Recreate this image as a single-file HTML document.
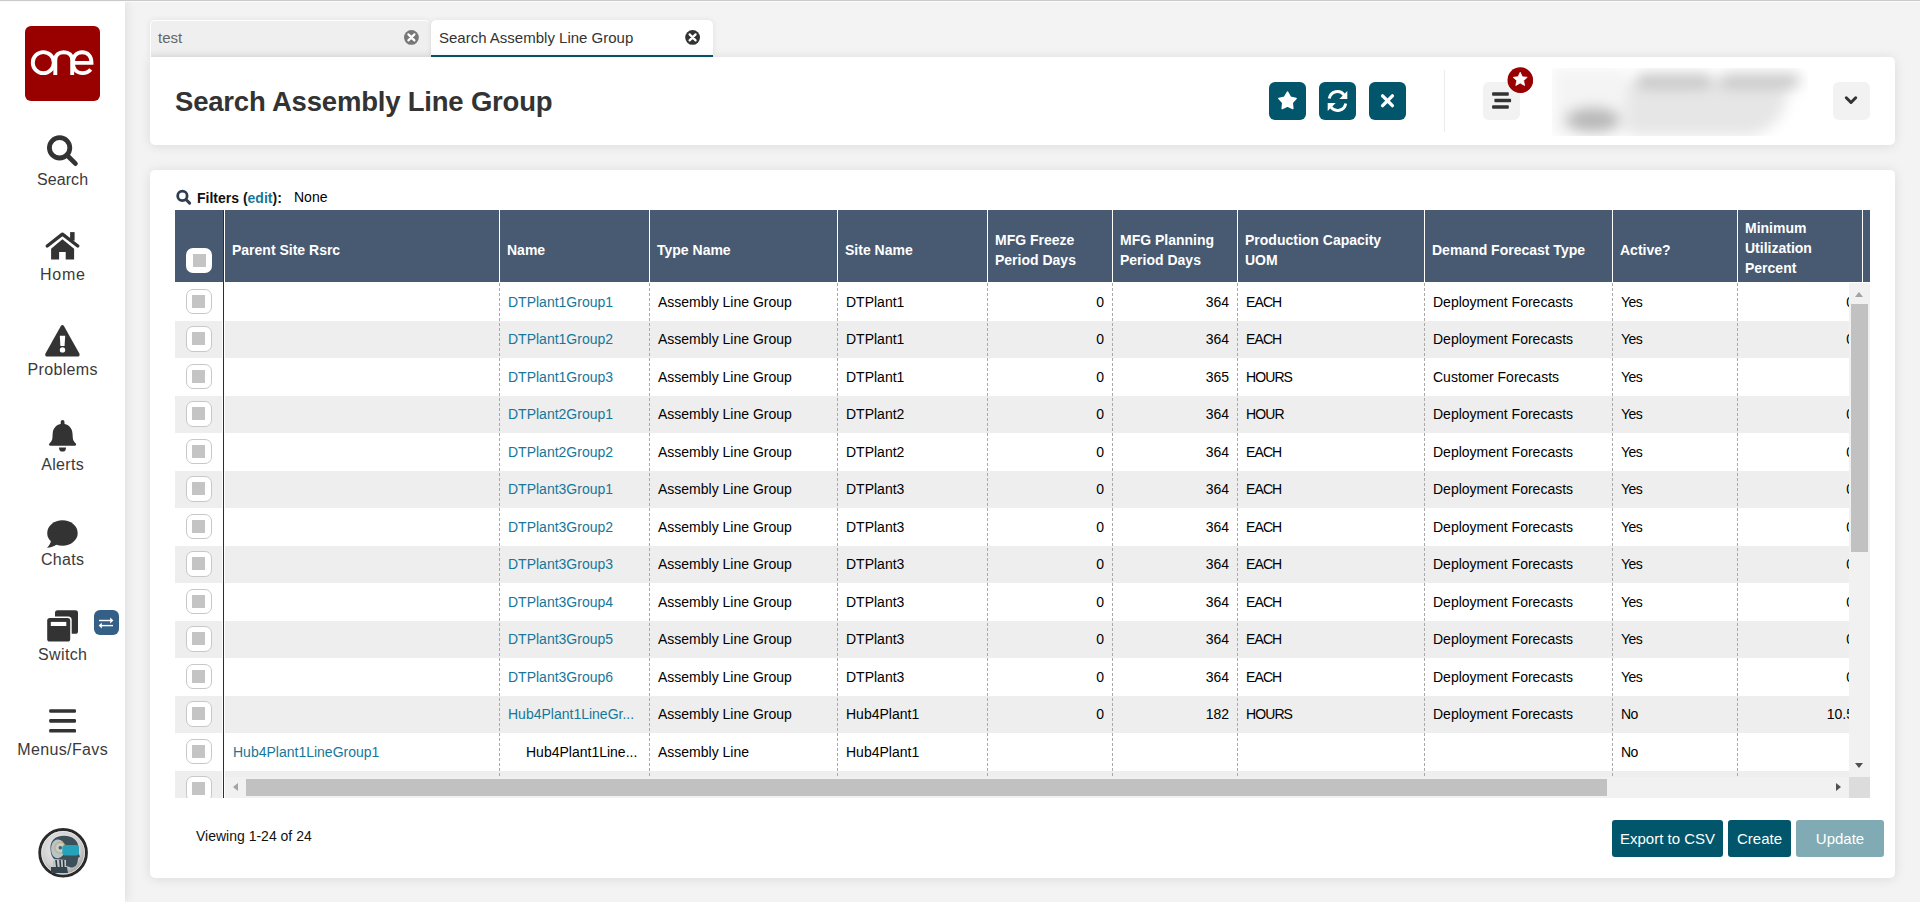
<!DOCTYPE html><html><head><meta charset="utf-8"><style>
*{margin:0;padding:0;box-sizing:border-box}
html,body{width:1920px;height:902px;overflow:hidden}
body{background:#f3f3f3;font-family:"Liberation Sans", sans-serif;color:#333;position:relative}
.a{position:absolute}
.t{position:absolute;white-space:nowrap}
#topline{left:0;top:0;width:1920px;height:1px;background:#c9caca;z-index:5;box-shadow:0 1px 0 #fafafa}
#side{left:0;top:0;width:125px;height:902px;background:#fff;box-shadow:0 0 12px rgba(0,0,0,.11);z-index:3}
.nav{position:absolute;left:0;width:125px;text-align:center;font-size:16px;color:#3a3a3a;line-height:20px}
.card{position:absolute;background:#fff;border-radius:5px;box-shadow:0 1px 12px rgba(0,0,0,.10)}
.tbtn{position:absolute;top:82px;width:37px;height:38px;border-radius:6px;background:#02566b}
.gbtn{position:absolute;top:82px;width:37px;height:38px;border-radius:6px;background:#f2f2f2}
.th{position:absolute;color:#fff;font-weight:bold;font-size:14px;line-height:20px;padding-left:7px;white-space:nowrap}
.cell{position:absolute;font-size:14px;line-height:37.5px;height:37.5px;white-space:nowrap;color:#000}
.lnk{color:#16779a}
.r{text-align:right}
.cb{position:absolute;left:186px;width:26px;height:25.5px;border:1.5px solid #c8c8c8;border-radius:7px;background:#fff}
.cb:after{content:"";position:absolute;left:5px;top:5px;width:13px;height:13px;background:#c4c4c4}
.btn{position:absolute;top:820px;height:37px;border-radius:3px;background:#02566b;color:#fff;font-size:15px;line-height:37px;text-align:center}
</style></head><body><div id="topline" class="a"></div>
<div id="side" class="a">
<svg class="a" style="left:0;top:0" width="125" height="902" viewBox="0 0 125 902">
<rect x="25" y="26" width="75" height="75" rx="6" fill="#990000"/>
<g fill="none" stroke="#fff" stroke-width="3.9">
<circle cx="43.3" cy="62.65" r="10.5"/>
<path d="M55.3,75.1 V60 C55.3,55 58.5,52.2 63.7,52.2 C69,52.2 72.2,55 72.2,60 V75.1"/>
<path d="M73,62.9 H91.5 C91.5,56.5 88,52.2 82.2,52.2 C76.5,52.2 72.9,56.5 72.9,62.7 C72.9,69 76.8,73.1 82.5,73.1 C86,73.1 88.8,71.8 90.8,69.5"/>
</g>
<!-- search -->
<circle cx="59.6" cy="147.8" r="10.2" fill="none" stroke="#333" stroke-width="4.8"/>
<path d="M66.8,155 L75.5,163.7" stroke="#333" stroke-width="4.6" stroke-linecap="round"/>
<!-- home -->
<g transform="translate(40,225)" fill="#333">
<polyline points="7.2,21 22.4,9.1 37.8,21" fill="none" stroke="#333" stroke-width="3.3" stroke-linecap="round" stroke-linejoin="round"/>
<rect x="30.1" y="7.1" width="4.5" height="8.5"/>
<polygon points="11.1,23.8 22.4,14.3 34.1,23.8 34.1,34.4 25.7,34.4 25.7,27 19.1,27 19.1,34.4 11.1,34.4"/>
</g>
<!-- problems -->
<g transform="translate(40,320)">
<path d="M20.6,6.4 Q22.4,3.6 24.2,6.4 L39.2,33.2 Q40.6,36.6 37.2,36.6 H7.6 Q4.2,36.6 5.6,33.2 Z" fill="#333"/>
<path d="M19.8,15.7 H25.2 L24.6,25.9 H20.4 Z" fill="#fff"/>
<circle cx="22.5" cy="29.9" r="2.7" fill="#fff"/>
</g>
<!-- alerts -->
<g transform="translate(40,412)" fill="#333">
<rect x="20.7" y="8" width="3.8" height="6" rx="1.9"/>
<path d="M22.6,11.7 C17.2,11.7 12.9,15.8 12.7,21.5 L12.4,26 C12.2,28.5 11,30 9.6,31.2 C8.6,32.1 9,33.7 10.3,33.7 H34.9 C36.2,33.7 36.6,32.1 35.6,31.2 C34.2,30 33,28.5 32.8,26 L32.5,21.5 C32.3,15.8 28,11.7 22.6,11.7 Z"/>
<path d="M19,35.4 H26 A3.5,4.2 0 0 1 19,35.4 Z"/>
</g>
<!-- chats -->
<g transform="translate(40,510)" fill="#333">
<ellipse cx="22.45" cy="23" rx="15.25" ry="12.7"/>
<path d="M11.2,30 C10.6,33.5 9,36 7,37.7 C10.5,37.6 14,36.3 17,34.2 Z"/>
</g>
<!-- switch -->
<g transform="translate(40,600)">
<rect x="15" y="10.3" width="23" height="23.5" rx="2.6" fill="#333"/>
<rect x="5.7" y="16.5" width="26" height="26.6" rx="3.6" fill="#fff"/>
<rect x="7.2" y="18" width="23" height="23.6" rx="2.6" fill="#333"/>
<rect x="10.8" y="21.9" width="15.5" height="4.1" fill="#fff"/>
<rect x="54" y="10" width="25" height="25" rx="6" fill="#346088"/>
<g stroke="#fff" stroke-width="1.4" fill="none">
<path d="M59,20.5 H71.5"/><path d="M61,25.6 H73"/>
</g>
<path d="M70.2,17.6 L73.4,20.5 L70.2,23.4 Z" fill="#fff"/>
<path d="M61.8,22.7 L58.6,25.6 L61.8,28.5 Z" fill="#fff"/>
</g>
<!-- menus -->
<g fill="#333">
<rect x="49.2" y="709.2" width="26.8" height="3.6" rx="1.2"/>
<rect x="49.2" y="719.1" width="26.8" height="3.6" rx="1.2"/>
<rect x="49.2" y="729" width="26.8" height="3.6" rx="1.2"/>
</g>
<!-- avatar -->
<defs>
<radialGradient id="ag" cx="0.45" cy="0.4" r="0.6"><stop offset="0" stop-color="#f4f4f4"/><stop offset="0.7" stop-color="#cfcfcf"/><stop offset="1" stop-color="#9a9a9a"/></radialGradient>
<clipPath id="ac"><circle cx="30.1" cy="29.8" r="22.6"/></clipPath>
</defs>
<circle cx="63.1" cy="852.8" r="23.3" fill="url(#ag)" stroke="#2a2a2a" stroke-width="3"/>
<circle cx="63.1" cy="852.8" r="21.4" fill="none" stroke="#f0f0f0" stroke-width="0.8"/>
<g clip-path="url(#ac)" transform="translate(33,823)">
<path d="M17.5,27 C16.5,18 22,12.8 31,12.8 C40,12.8 45.5,18 45.5,25 L45.8,31 L47,33.5 L45.2,35 L44.5,39 C44,42 42,44.5 38,44.5 L33,43 L33,50 L20,50 L21,36 C18.5,33.5 17.8,30 17.5,27 Z" fill="#3b5059"/>
<path d="M18.2,28 C17.6,22 19.5,17.5 24,16.5 C28,16 31.5,19 32,24 C32.5,29 30.5,33.5 26,35 C22,36 19,33 18.2,28 Z" fill="#b9c4c7"/>
<circle cx="27.3" cy="24.7" r="5.6" fill="none" stroke="#c8a868" stroke-width="0.9"/>
<circle cx="27.3" cy="24.7" r="3.4" fill="none" stroke="#e6dcc0" stroke-width="0.8"/>
<circle cx="27.3" cy="24.7" r="1.7" fill="#45606a"/>
<rect x="29.3" y="22" width="16.7" height="10.5" rx="3" fill="#26a2ba"/>
<path d="M21,36 L33,37 L33,50 L19,50 Z" fill="#c2c8ca"/>
<path d="M23,37 L24.5,50 M27,37 L28,50 M30.5,37 L31,50" stroke="#2d3a40" stroke-width="1.6"/>
<path d="M18,44 L34,44 L35,50 L18,50 Z" fill="#34454d"/>
</g>
<!-- labels -->
</svg>
<div class="nav" style="top:169.5px;letter-spacing:0.1px;text-indent:0.1px">Search</div>
<div class="nav" style="top:264.5px;letter-spacing:0.7px;text-indent:0.7px">Home</div>
<div class="nav" style="top:359.5px;letter-spacing:0.35px;text-indent:0.35px">Problems</div>
<div class="nav" style="top:454.5px;letter-spacing:0.35px;text-indent:0.35px">Alerts</div>
<div class="nav" style="top:549.5px;letter-spacing:0.35px;text-indent:0.35px">Chats</div>
<div class="nav" style="top:644.5px;letter-spacing:0.35px;text-indent:0.35px">Switch</div>
<div class="nav" style="top:739.5px;letter-spacing:0.35px;text-indent:0.35px">Menus/Favs</div>
</div>
<div class="a" style="left:150px;top:20px;width:280px;height:37px;background:#efefef;border-radius:5px 5px 0 0;border-top:1px solid #fff;border-left:1px solid #fff;box-shadow:inset 0 -5px 5px -3px rgba(0,0,0,.05),0 0 6px rgba(0,0,0,.08)"></div>
<div class="t" style="left:158px;top:28px;font-size:15px;line-height:20px;color:#666">test</div>
<div class="a" style="left:431px;top:20px;width:282px;height:37px;background:#fff;border-radius:5px 5px 0 0;border-bottom:2px solid #02566b;box-shadow:0 0 6px rgba(0,0,0,.08)"></div>
<div class="t" style="left:439px;top:28px;font-size:15px;line-height:20px;color:#333">Search Assembly Line Group</div>
<div class="card" style="left:150px;top:57px;width:1745px;height:88px;border-top-left-radius:0"></div>
<div class="t" style="left:175px;top:84.5px;font-size:27.5px;letter-spacing:-0.2px;line-height:34px;font-weight:bold;color:#333">Search Assembly Line Group</div>
<div class="tbtn" style="left:1269px"></div>
<div class="tbtn" style="left:1319px"></div>
<div class="tbtn" style="left:1369px"></div>
<div class="a" style="left:1444px;top:70px;width:1px;height:62px;background:#ececec"></div>
<div class="gbtn" style="left:1483px"></div>
<div class="a" style="left:1507.5px;top:67.5px;width:25px;height:25px;border-radius:50%;background:#990000"></div>
<div class="gbtn" style="left:1833px"></div>
<div class="card" style="left:150px;top:170px;width:1745px;height:708px"></div>
<div class="t" style="left:197px;top:188px;font-size:14px;line-height:20px;font-weight:bold;color:#111">Filters (<span style="color:#16779a">edit</span>):</div>
<div class="t" style="left:294px;top:187px;font-size:14px;line-height:20px;color:#000">None</div>
<svg class="a" style="left:0;top:0" width="1920" height="210" viewBox="0 0 1920 210">
<circle cx="411.4" cy="37.4" r="7.4" fill="#777"/>
<path d="M408.4,34.4 L414.4,40.4 M414.4,34.4 L408.4,40.4" stroke="#fff" stroke-width="2.2" stroke-linecap="round"/>
<circle cx="692.6" cy="37.4" r="7.4" fill="#333"/>
<path d="M689.6,34.4 L695.6,40.4 M695.6,34.4 L689.6,40.4" stroke="#fff" stroke-width="2.2" stroke-linecap="round"/>
<!-- star btn -->
<path d="M1287.50,92.20 L1290.38,97.24 L1296.06,98.42 L1292.16,102.71 L1292.79,108.48 L1287.50,106.10 L1282.21,108.48 L1282.84,102.71 L1278.94,98.42 L1284.62,97.24 Z" fill="#fff" stroke="#fff" stroke-width="1.6" stroke-linejoin="round"/>
<!-- refresh -->
<g fill="none" stroke="#fff" stroke-width="2.9">
<path d="M1329.3,98.5 A8.2,8.2 0 0 1 1344.2,95.2"/>
<path d="M1345.7,103.5 A8.2,8.2 0 0 1 1330.8,106.8"/>
</g>
<path d="M1347.3,91 V99 H1339.3 Z" fill="#fff"/>
<path d="M1327.7,111 V103 H1335.7 Z" fill="#fff"/>
<!-- close -->
<path d="M1382.6,95.9 L1392.4,105.6 M1392.4,95.9 L1382.6,105.6" stroke="#fff" stroke-width="3.4" stroke-linecap="round"/>
<!-- hamburger -->
<g fill="#333">
<rect x="1492.1" y="92.2" width="16.7" height="3.6" rx="0.8"/><rect x="1494.4" y="98.7" width="16.7" height="3.6" rx="0.8"/><rect x="1492.1" y="105.2" width="16.7" height="3.6" rx="0.8"/>
</g>
<circle cx="1520.2" cy="79.9" r="12.7" fill="#990000"/>
<path d="M1520.2,72.3 L1522.3,76.8 L1527.2,77.3 L1523.6,80.6 L1524.6,85.5 L1520.2,83 L1515.8,85.5 L1516.8,80.6 L1513.2,77.3 L1518.1,76.8 Z" fill="#fff" stroke="#fff" stroke-width="0.8" stroke-linejoin="round"/>
<!-- chevron -->
<path d="M1846.3,97.8 L1851,102.5 L1855.7,97.8" fill="none" stroke="#333" stroke-width="3" stroke-linecap="round" stroke-linejoin="round"/>
<!-- filter search -->
<circle cx="182.4" cy="195.9" r="4.7" fill="none" stroke="#2d3e50" stroke-width="2.8"/>
<path d="M186.2,199.7 L189.6,203.1" stroke="#2d3e50" stroke-width="3" stroke-linecap="round"/>
</svg>
<div class="a" style="left:1552px;top:68px;width:256px;height:68px;overflow:hidden;background:#fff">
<div class="a" style="left:0;top:0;width:256px;height:68px;filter:blur(7px)">
<div class="a" style="left:0;top:0;width:75px;height:68px;background:#f4f4f4"></div>
<div class="a" style="left:75px;top:10px;width:160px;height:58px;background:#e6e6e6;border-radius:20px 20px 60px 10px"></div>
<div class="a" style="left:84px;top:6px;width:76px;height:14px;background:#c4c4c4;border-radius:7px"></div>
<div class="a" style="left:168px;top:6px;width:80px;height:14px;background:#c6c6c6;border-radius:7px"></div>
<div class="a" style="left:14px;top:40px;width:54px;height:24px;background:#b8b8b8;border-radius:50%"></div>
</div></div>
<div class="t" style="left:196px;top:826px;font-size:14px;line-height:20px;color:#111">Viewing 1-24 of 24</div>
<div class="btn" style="left:1612px;width:111px">Export to CSV</div>
<div class="btn" style="left:1728px;width:63px">Create</div>
<div class="btn" style="left:1796px;width:88px;background:#80abb5">Update</div><div class="a" style="left:175px;top:210px;width:48px;height:72px;background:#475a72"></div>
<div class="a" style="left:225px;top:210px;width:1645px;height:72px;background:#475a72"></div>
<div class="a" style="left:499px;top:210px;width:1px;height:72px;background:#fff"></div>
<div class="a" style="left:649px;top:210px;width:1px;height:72px;background:#fff"></div>
<div class="a" style="left:837px;top:210px;width:1px;height:72px;background:#fff"></div>
<div class="a" style="left:987px;top:210px;width:1px;height:72px;background:#fff"></div>
<div class="a" style="left:1112px;top:210px;width:1px;height:72px;background:#fff"></div>
<div class="a" style="left:1237px;top:210px;width:1px;height:72px;background:#fff"></div>
<div class="a" style="left:1424px;top:210px;width:1px;height:72px;background:#fff"></div>
<div class="a" style="left:1612px;top:210px;width:1px;height:72px;background:#fff"></div>
<div class="a" style="left:1737px;top:210px;width:1px;height:72px;background:#fff"></div>
<div class="a" style="left:1862px;top:210px;width:1px;height:72px;background:#fff"></div>
<div class="th" style="left:225px;top:240px;width:274px">Parent Site Rsrc</div>
<div class="th" style="left:500px;top:240px;width:149px">Name</div>
<div class="th" style="left:650px;top:240px;width:187px">Type Name</div>
<div class="th" style="left:838px;top:240px;width:149px">Site Name</div>
<div class="th" style="left:988px;top:230px;width:124px">MFG Freeze<br>Period Days</div>
<div class="th" style="left:1113px;top:230px;width:124px">MFG Planning<br>Period Days</div>
<div class="th" style="left:1238px;top:230px;width:186px">Production Capacity<br>UOM</div>
<div class="th" style="left:1425px;top:240px;width:187px">Demand Forecast Type</div>
<div class="th" style="left:1613px;top:240px;width:124px">Active?</div>
<div class="th" style="left:1738px;top:218px;width:124px">Minimum<br>Utilization<br>Percent</div>
<div class="a" style="left:186px;top:247.5px;width:26px;height:25.5px;border-radius:7px;background:#fff"></div>
<div class="a" style="left:192.5px;top:254px;width:13px;height:13px;background:#c4c4c4"></div>
<div class="a" style="left:175px;top:283px;width:48px;height:515px;overflow:hidden">
<div class="cb" style="left:11px;top:5.5px"></div>
<div class="a" style="left:0;top:38.0px;width:47px;height:37px;background:#eeeeee"></div>
<div class="cb" style="left:11px;top:43.0px"></div>
<div class="cb" style="left:11px;top:80.5px"></div>
<div class="a" style="left:0;top:113.0px;width:47px;height:37px;background:#eeeeee"></div>
<div class="cb" style="left:11px;top:118.0px"></div>
<div class="cb" style="left:11px;top:155.5px"></div>
<div class="a" style="left:0;top:188.0px;width:47px;height:37px;background:#eeeeee"></div>
<div class="cb" style="left:11px;top:193.0px"></div>
<div class="cb" style="left:11px;top:230.5px"></div>
<div class="a" style="left:0;top:263.0px;width:47px;height:37px;background:#eeeeee"></div>
<div class="cb" style="left:11px;top:268.0px"></div>
<div class="cb" style="left:11px;top:305.5px"></div>
<div class="a" style="left:0;top:338.0px;width:47px;height:37px;background:#eeeeee"></div>
<div class="cb" style="left:11px;top:343.0px"></div>
<div class="cb" style="left:11px;top:380.5px"></div>
<div class="a" style="left:0;top:413.0px;width:47px;height:37px;background:#eeeeee"></div>
<div class="cb" style="left:11px;top:418.0px"></div>
<div class="cb" style="left:11px;top:455.5px"></div>
<div class="a" style="left:0;top:488.0px;width:47px;height:37px;background:#eeeeee"></div>
<div class="cb" style="left:11px;top:493.0px"></div>
</div>
<div class="a" style="left:223px;top:210px;width:1px;height:588px;background:#2b2f33"></div>
<div class="a" style="left:225px;top:283px;width:1624px;height:494px;overflow:hidden">
<div class="a" style="left:0;top:38.0px;width:1624px;height:37px;background:#eeeeee"></div>
<div class="a" style="left:0;top:113.0px;width:1624px;height:37px;background:#eeeeee"></div>
<div class="a" style="left:0;top:188.0px;width:1624px;height:37px;background:#eeeeee"></div>
<div class="a" style="left:0;top:263.0px;width:1624px;height:37px;background:#eeeeee"></div>
<div class="a" style="left:0;top:338.0px;width:1624px;height:37px;background:#eeeeee"></div>
<div class="a" style="left:0;top:413.0px;width:1624px;height:37px;background:#eeeeee"></div>
<div class="a" style="left:0;top:488.0px;width:1624px;height:37px;background:#eeeeee"></div>
<div class="a" style="left:274px;top:0;width:1px;height:494px;background:repeating-linear-gradient(to bottom,#a9a9a9 0 3px,transparent 3px 5px)"></div>
<div class="a" style="left:424px;top:0;width:1px;height:494px;background:repeating-linear-gradient(to bottom,#a9a9a9 0 3px,transparent 3px 5px)"></div>
<div class="a" style="left:612px;top:0;width:1px;height:494px;background:repeating-linear-gradient(to bottom,#a9a9a9 0 3px,transparent 3px 5px)"></div>
<div class="a" style="left:762px;top:0;width:1px;height:494px;background:repeating-linear-gradient(to bottom,#a9a9a9 0 3px,transparent 3px 5px)"></div>
<div class="a" style="left:887px;top:0;width:1px;height:494px;background:repeating-linear-gradient(to bottom,#a9a9a9 0 3px,transparent 3px 5px)"></div>
<div class="a" style="left:1012px;top:0;width:1px;height:494px;background:repeating-linear-gradient(to bottom,#a9a9a9 0 3px,transparent 3px 5px)"></div>
<div class="a" style="left:1199px;top:0;width:1px;height:494px;background:repeating-linear-gradient(to bottom,#a9a9a9 0 3px,transparent 3px 5px)"></div>
<div class="a" style="left:1387px;top:0;width:1px;height:494px;background:repeating-linear-gradient(to bottom,#a9a9a9 0 3px,transparent 3px 5px)"></div>
<div class="a" style="left:1512px;top:0;width:1px;height:494px;background:repeating-linear-gradient(to bottom,#a9a9a9 0 3px,transparent 3px 5px)"></div>
<div class="a" style="left:1637px;top:0;width:1px;height:494px;background:repeating-linear-gradient(to bottom,#a9a9a9 0 3px,transparent 3px 5px)"></div>
<div class="cell lnk" style="left:283px;top:0.5px;">DTPlant1Group1</div>
<div class="cell" style="left:433px;top:0.5px;">Assembly Line Group</div>
<div class="cell" style="left:621px;top:0.5px;">DTPlant1</div>
<div class="cell r" style="left:763px;width:116px;top:0.5px">0</div>
<div class="cell r" style="left:888px;width:116px;top:0.5px">364</div>
<div class="cell" style="left:1021px;top:0.5px;letter-spacing:-0.9px;">EACH</div>
<div class="cell" style="left:1208px;top:0.5px;">Deployment Forecasts</div>
<div class="cell" style="left:1396px;top:0.5px;letter-spacing:-0.5px;">Yes</div>
<div class="cell r" style="left:1513px;width:116px;top:0.5px">0</div>
<div class="cell lnk" style="left:283px;top:38.0px;">DTPlant1Group2</div>
<div class="cell" style="left:433px;top:38.0px;">Assembly Line Group</div>
<div class="cell" style="left:621px;top:38.0px;">DTPlant1</div>
<div class="cell r" style="left:763px;width:116px;top:38.0px">0</div>
<div class="cell r" style="left:888px;width:116px;top:38.0px">364</div>
<div class="cell" style="left:1021px;top:38.0px;letter-spacing:-0.9px;">EACH</div>
<div class="cell" style="left:1208px;top:38.0px;">Deployment Forecasts</div>
<div class="cell" style="left:1396px;top:38.0px;letter-spacing:-0.5px;">Yes</div>
<div class="cell r" style="left:1513px;width:116px;top:38.0px">0</div>
<div class="cell lnk" style="left:283px;top:75.5px;">DTPlant1Group3</div>
<div class="cell" style="left:433px;top:75.5px;">Assembly Line Group</div>
<div class="cell" style="left:621px;top:75.5px;">DTPlant1</div>
<div class="cell r" style="left:763px;width:116px;top:75.5px">0</div>
<div class="cell r" style="left:888px;width:116px;top:75.5px">365</div>
<div class="cell" style="left:1021px;top:75.5px;letter-spacing:-0.9px;">HOURS</div>
<div class="cell" style="left:1208px;top:75.5px;">Customer Forecasts</div>
<div class="cell" style="left:1396px;top:75.5px;letter-spacing:-0.5px;">Yes</div>
<div class="cell lnk" style="left:283px;top:113.0px;">DTPlant2Group1</div>
<div class="cell" style="left:433px;top:113.0px;">Assembly Line Group</div>
<div class="cell" style="left:621px;top:113.0px;">DTPlant2</div>
<div class="cell r" style="left:763px;width:116px;top:113.0px">0</div>
<div class="cell r" style="left:888px;width:116px;top:113.0px">364</div>
<div class="cell" style="left:1021px;top:113.0px;letter-spacing:-0.9px;">HOUR</div>
<div class="cell" style="left:1208px;top:113.0px;">Deployment Forecasts</div>
<div class="cell" style="left:1396px;top:113.0px;letter-spacing:-0.5px;">Yes</div>
<div class="cell r" style="left:1513px;width:116px;top:113.0px">0</div>
<div class="cell lnk" style="left:283px;top:150.5px;">DTPlant2Group2</div>
<div class="cell" style="left:433px;top:150.5px;">Assembly Line Group</div>
<div class="cell" style="left:621px;top:150.5px;">DTPlant2</div>
<div class="cell r" style="left:763px;width:116px;top:150.5px">0</div>
<div class="cell r" style="left:888px;width:116px;top:150.5px">364</div>
<div class="cell" style="left:1021px;top:150.5px;letter-spacing:-0.9px;">EACH</div>
<div class="cell" style="left:1208px;top:150.5px;">Deployment Forecasts</div>
<div class="cell" style="left:1396px;top:150.5px;letter-spacing:-0.5px;">Yes</div>
<div class="cell r" style="left:1513px;width:116px;top:150.5px">0</div>
<div class="cell lnk" style="left:283px;top:188.0px;">DTPlant3Group1</div>
<div class="cell" style="left:433px;top:188.0px;">Assembly Line Group</div>
<div class="cell" style="left:621px;top:188.0px;">DTPlant3</div>
<div class="cell r" style="left:763px;width:116px;top:188.0px">0</div>
<div class="cell r" style="left:888px;width:116px;top:188.0px">364</div>
<div class="cell" style="left:1021px;top:188.0px;letter-spacing:-0.9px;">EACH</div>
<div class="cell" style="left:1208px;top:188.0px;">Deployment Forecasts</div>
<div class="cell" style="left:1396px;top:188.0px;letter-spacing:-0.5px;">Yes</div>
<div class="cell r" style="left:1513px;width:116px;top:188.0px">0</div>
<div class="cell lnk" style="left:283px;top:225.5px;">DTPlant3Group2</div>
<div class="cell" style="left:433px;top:225.5px;">Assembly Line Group</div>
<div class="cell" style="left:621px;top:225.5px;">DTPlant3</div>
<div class="cell r" style="left:763px;width:116px;top:225.5px">0</div>
<div class="cell r" style="left:888px;width:116px;top:225.5px">364</div>
<div class="cell" style="left:1021px;top:225.5px;letter-spacing:-0.9px;">EACH</div>
<div class="cell" style="left:1208px;top:225.5px;">Deployment Forecasts</div>
<div class="cell" style="left:1396px;top:225.5px;letter-spacing:-0.5px;">Yes</div>
<div class="cell r" style="left:1513px;width:116px;top:225.5px">0</div>
<div class="cell lnk" style="left:283px;top:263.0px;">DTPlant3Group3</div>
<div class="cell" style="left:433px;top:263.0px;">Assembly Line Group</div>
<div class="cell" style="left:621px;top:263.0px;">DTPlant3</div>
<div class="cell r" style="left:763px;width:116px;top:263.0px">0</div>
<div class="cell r" style="left:888px;width:116px;top:263.0px">364</div>
<div class="cell" style="left:1021px;top:263.0px;letter-spacing:-0.9px;">EACH</div>
<div class="cell" style="left:1208px;top:263.0px;">Deployment Forecasts</div>
<div class="cell" style="left:1396px;top:263.0px;letter-spacing:-0.5px;">Yes</div>
<div class="cell r" style="left:1513px;width:116px;top:263.0px">0</div>
<div class="cell lnk" style="left:283px;top:300.5px;">DTPlant3Group4</div>
<div class="cell" style="left:433px;top:300.5px;">Assembly Line Group</div>
<div class="cell" style="left:621px;top:300.5px;">DTPlant3</div>
<div class="cell r" style="left:763px;width:116px;top:300.5px">0</div>
<div class="cell r" style="left:888px;width:116px;top:300.5px">364</div>
<div class="cell" style="left:1021px;top:300.5px;letter-spacing:-0.9px;">EACH</div>
<div class="cell" style="left:1208px;top:300.5px;">Deployment Forecasts</div>
<div class="cell" style="left:1396px;top:300.5px;letter-spacing:-0.5px;">Yes</div>
<div class="cell r" style="left:1513px;width:116px;top:300.5px">0</div>
<div class="cell lnk" style="left:283px;top:338.0px;">DTPlant3Group5</div>
<div class="cell" style="left:433px;top:338.0px;">Assembly Line Group</div>
<div class="cell" style="left:621px;top:338.0px;">DTPlant3</div>
<div class="cell r" style="left:763px;width:116px;top:338.0px">0</div>
<div class="cell r" style="left:888px;width:116px;top:338.0px">364</div>
<div class="cell" style="left:1021px;top:338.0px;letter-spacing:-0.9px;">EACH</div>
<div class="cell" style="left:1208px;top:338.0px;">Deployment Forecasts</div>
<div class="cell" style="left:1396px;top:338.0px;letter-spacing:-0.5px;">Yes</div>
<div class="cell r" style="left:1513px;width:116px;top:338.0px">0</div>
<div class="cell lnk" style="left:283px;top:375.5px;">DTPlant3Group6</div>
<div class="cell" style="left:433px;top:375.5px;">Assembly Line Group</div>
<div class="cell" style="left:621px;top:375.5px;">DTPlant3</div>
<div class="cell r" style="left:763px;width:116px;top:375.5px">0</div>
<div class="cell r" style="left:888px;width:116px;top:375.5px">364</div>
<div class="cell" style="left:1021px;top:375.5px;letter-spacing:-0.9px;">EACH</div>
<div class="cell" style="left:1208px;top:375.5px;">Deployment Forecasts</div>
<div class="cell" style="left:1396px;top:375.5px;letter-spacing:-0.5px;">Yes</div>
<div class="cell r" style="left:1513px;width:116px;top:375.5px">0</div>
<div class="cell lnk" style="left:283px;top:413.0px;">Hub4Plant1LineGr...</div>
<div class="cell" style="left:433px;top:413.0px;">Assembly Line Group</div>
<div class="cell" style="left:621px;top:413.0px;">Hub4Plant1</div>
<div class="cell r" style="left:763px;width:116px;top:413.0px">0</div>
<div class="cell r" style="left:888px;width:116px;top:413.0px">182</div>
<div class="cell" style="left:1021px;top:413.0px;letter-spacing:-0.9px;">HOURS</div>
<div class="cell" style="left:1208px;top:413.0px;">Deployment Forecasts</div>
<div class="cell" style="left:1396px;top:413.0px;letter-spacing:-0.5px;">No</div>
<div class="cell r" style="left:1513px;width:116px;top:413.0px">10.5</div>
<div class="cell lnk" style="left:8px;top:450.5px;">Hub4Plant1LineGroup1</div>
<div class="cell" style="left:301px;top:450.5px;">Hub4Plant1Line...</div>
<div class="cell" style="left:433px;top:450.5px;">Assembly Line</div>
<div class="cell" style="left:621px;top:450.5px;">Hub4Plant1</div>
<div class="cell" style="left:1396px;top:450.5px;letter-spacing:-0.5px;">No</div>
</div>
<div class="a" style="left:1849px;top:283px;width:21px;height:494px;background:#f1f1f1"></div>
<div class="a" style="left:1851px;top:304px;width:17px;height:248px;background:#c1c1c1"></div>
<div class="a" style="left:1855px;top:292px;width:0;height:0;border-left:4.5px solid transparent;border-right:4.5px solid transparent;border-bottom:5px solid #a3a3a3"></div>
<div class="a" style="left:1855px;top:763px;width:0;height:0;border-left:4.5px solid transparent;border-right:4.5px solid transparent;border-top:5px solid #505050"></div>
<div class="a" style="left:225px;top:777px;width:1624px;height:21px;background:#f1f1f1"></div>
<div class="a" style="left:246px;top:779px;width:1361px;height:17px;background:#c1c1c1"></div>
<div class="a" style="left:233px;top:783px;width:0;height:0;border-top:4.5px solid transparent;border-bottom:4.5px solid transparent;border-right:5px solid #a3a3a3"></div>
<div class="a" style="left:1836px;top:783px;width:0;height:0;border-top:4.5px solid transparent;border-bottom:4.5px solid transparent;border-left:5px solid #505050"></div>
<div class="a" style="left:1849px;top:777px;width:21px;height:21px;background:#dcdcdc"></div></body></html>
